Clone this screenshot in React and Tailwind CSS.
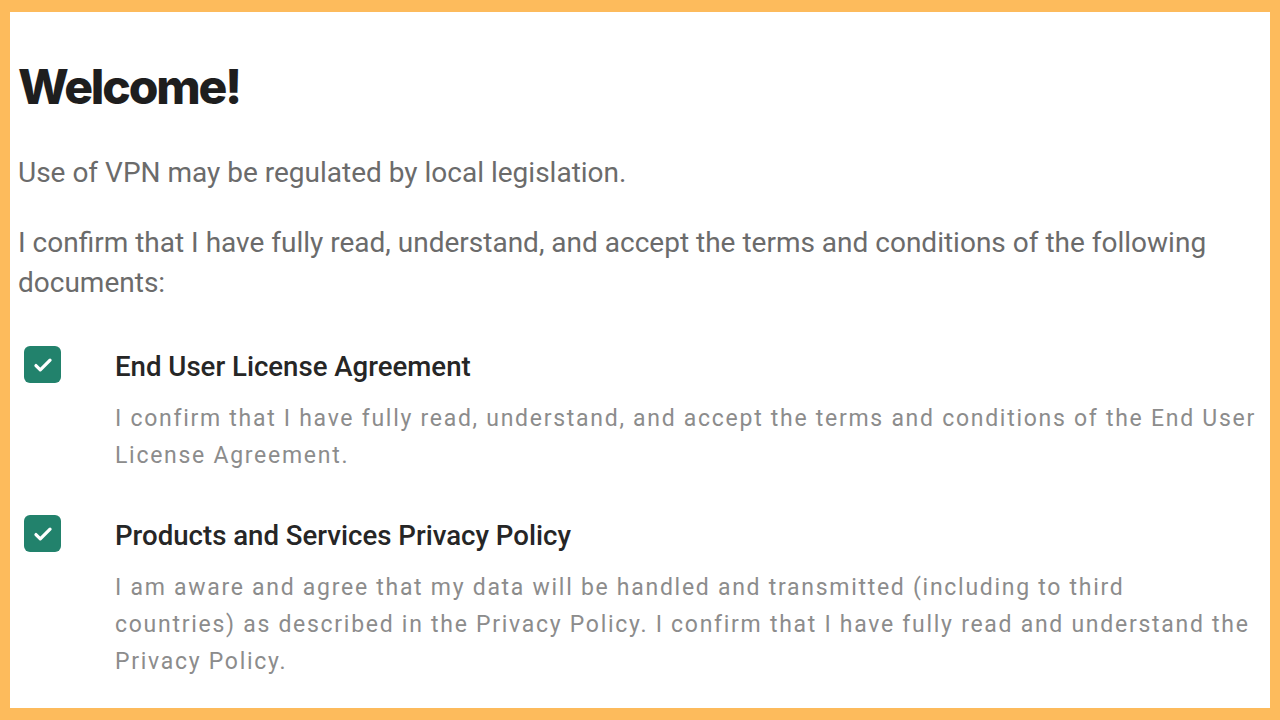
import React from 'react';

const docs = [
  {
    title: 'End User License Agreement',
    lines: [
      'I confirm that I have fully read, understand, and accept the terms and conditions of the End User',
      'License Agreement.',
    ],
  },
  {
    title: 'Products and Services Privacy Policy',
    lines: [
      'I am aware and agree that my data will be handled and transmitted (including to third',
      'countries) as described in the Privacy Policy. I confirm that I have fully read and understand the',
      'Privacy Policy.',
    ],
  },
];

function CheckBox() {
  return (
    <div className="w-[37px] h-[37px] rounded-[6px] bg-[#22826c] flex items-center justify-center shrink-0">
      <svg width="26" height="26" viewBox="0 0 24 24" fill="none" stroke="white" strokeWidth="3" strokeLinecap="round" strokeLinejoin="round">
        <path d="M5.5 12.5l4 4L18.5 7.5" />
      </svg>
    </div>
  );
}

export default function App() {
  return (
    <div className="w-[1280px] h-[720px] bg-[#fdbb5c] pt-[12px] pb-[12px] px-[10px] font-['Roboto',sans-serif]">
      <div className="w-full h-full bg-white pl-[8px] pr-[8px] pt-[51px] overflow-hidden">
        <h1 className="text-[48px] leading-[48px] font-extrabold tracking-[-2.2px] text-[#1e1e1e] font-['Inter',sans-serif]">
          Welcome!
        </h1>
        <p className="mt-[42px] text-[28px] leading-[40px] text-[#6b6b6b]">
          Use of VPN may be regulated by local legislation.
        </p>
        <p className="mt-[30px] text-[28px] leading-[40px] text-[#6b6b6b]">
          I confirm that I have fully read, understand, and accept the terms and conditions of the following documents:
        </p>
        <div className="mt-[46px] flex flex-col gap-[44px]">
          {docs.map((d) => (
            <div key={d.title} className="flex items-start pl-[6px]">
              <div className="w-[91px] -mt-[3px]">
                <CheckBox />
              </div>
              <div className="flex-1">
                <div className="text-[27.6px] leading-[36px] font-medium text-[#262626]">{d.title}</div>
                <p className="mt-[15px] text-[23px] leading-[37px] tracking-[1.72px] text-[#8c8c8c] whitespace-nowrap">
                  {d.lines.map((l, i) => (
                    <span key={i} className="block">{l}</span>
                  ))}
                </p>
              </div>
            </div>
          ))}
        </div>
      </div>
    </div>
  );
}
